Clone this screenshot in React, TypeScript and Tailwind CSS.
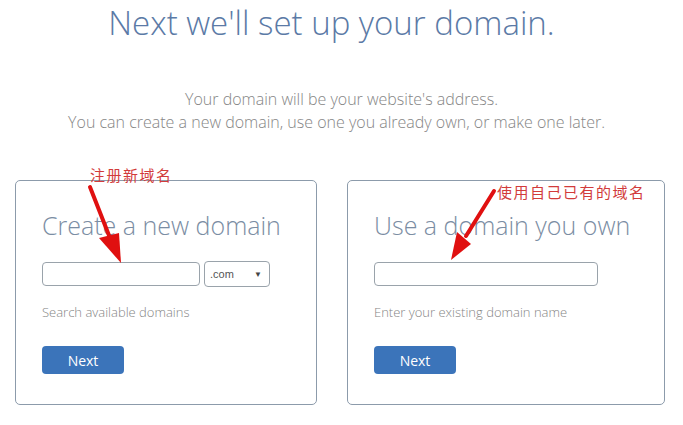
import React from 'react';

const sans = { fontFamily: '"Open Sans", "Noto Sans", "Liberation Sans", sans-serif' };
const cjk = { fontFamily: '"Noto Sans CJK SC", sans-serif' };

function DomainCard({
  title,
  hint,
  withTld,
  width,
}: {
  title: string;
  hint: string;
  withTld?: boolean;
  width: string;
}) {
  return (
    <div className={`${width} rounded-[5px] border border-[#8c9bab] bg-white pl-[26px] pt-[27px] pb-[30px]`}>
      <h2 className="text-[25px] leading-[34px] font-light text-[#7b8da3]">{title}</h2>
      <div className="mt-[19px] flex h-[26px] items-center gap-[4px]">
        <div className={`${withTld ? 'w-[158px]' : 'w-[224px]'} h-[24px] rounded-[4px] border border-[#9aa3ab] bg-white`} />
        {withTld && (
          <div className="flex h-[26px] w-[66px] items-center justify-between rounded-[4px] border border-[#9aa3ab] pl-[5px] pr-[7px]">
            <span className="text-[11px] text-[#555]" style={{ fontFamily: '"Liberation Sans", sans-serif' }}>
              .com
            </span>
            <span className="text-[8px] text-[#444]">▼</span>
          </div>
        )}
      </div>
      <p className="mt-[16px] text-[13px] leading-[18px] font-light text-[#858585]">{hint}</p>
      <button className="mt-[25px] flex h-[28px] w-[82px] items-center justify-center rounded-[4px] bg-[#3b74ba] text-[14px] text-white">
        Next
      </button>
    </div>
  );
}

export default function App() {
  return (
    <div className="relative h-[425px] w-[683px] overflow-hidden bg-white" style={sans}>
      <h1 className="pr-[20px] pt-[1px] text-center text-[33px] leading-[44px] font-light text-[#5b7aa6]">
        Next we'll set up your domain.
      </h1>

      <div className="mt-[43px] pr-[10px] text-center text-[16px] leading-[23px] font-light text-[#858585]">
        <p className="pl-[10px]">Your domain will be your website's address.</p>
        <p>You can create a new domain, use one you already own, or make one later.</p>
      </div>

      <div className="mt-[46px] flex gap-[30px] pl-[15px]">
        <DomainCard title="Create a new domain" hint="Search available domains" withTld width="w-[302px]" />
        <DomainCard title="Use a domain you own" hint="Enter your existing domain name" width="w-[318px]" />
      </div>

      {/* red annotations drawn on top */}
      <span
        className="absolute left-[90px] top-[165px] text-[15px] leading-[19px] tracking-[1.5px] text-[#d23b3b]"
        style={cjk}
      >
        注册新域名
      </span>
      <span
        className="absolute left-[497px] top-[182px] text-[15px] leading-[19px] tracking-[1.5px] text-[#d23b3b]"
        style={cjk}
      >
        使用自己已有的域名
      </span>
      <svg className="pointer-events-none absolute left-0 top-0" width="683" height="425" viewBox="0 0 683 425">
        <line x1="90" y1="187" x2="110" y2="238" stroke="#e01010" strokeWidth="4" strokeLinecap="round" />
        <polygon points="99,238 119,233 121,263" fill="#e01010" />
        <line x1="494" y1="191" x2="466" y2="236" stroke="#e01010" strokeWidth="4" strokeLinecap="round" />
        <polygon points="457,232 471,244 451,260" fill="#e01010" />
      </svg>
    </div>
  );
}
